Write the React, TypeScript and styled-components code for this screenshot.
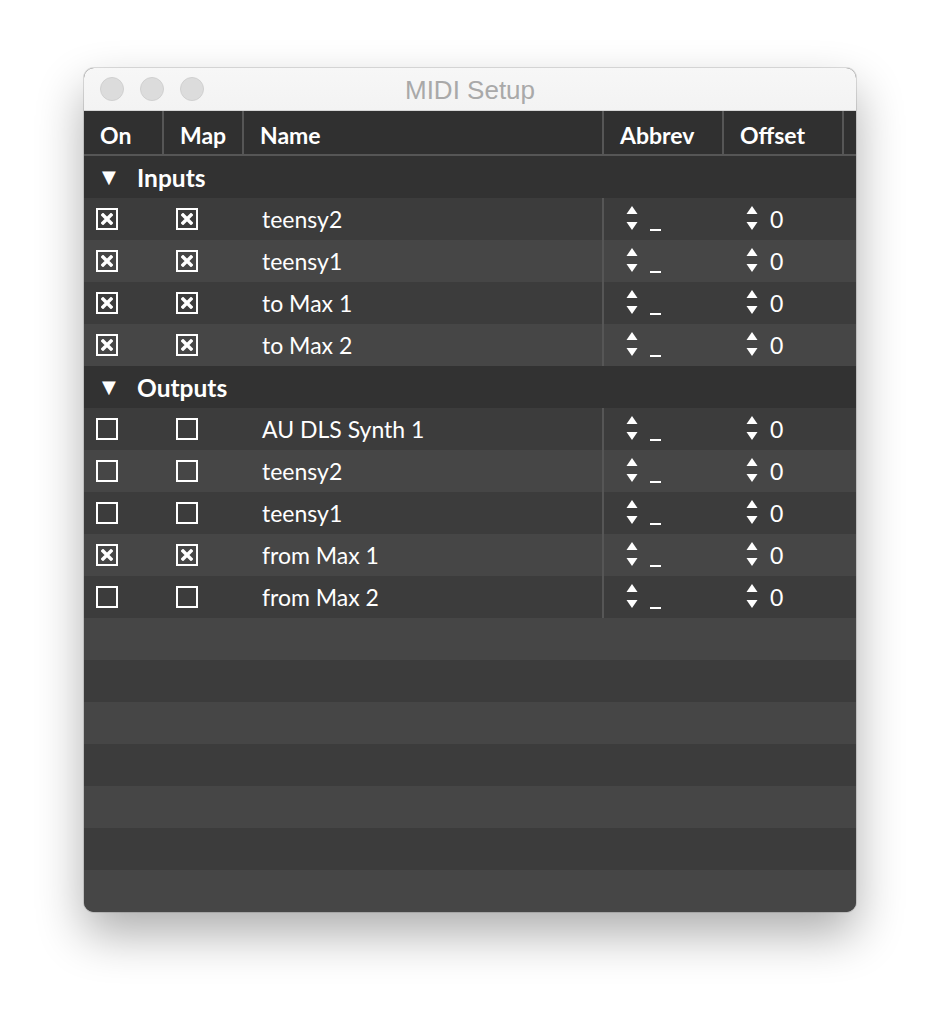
import React from "react";
import styled, { createGlobalStyle } from "styled-components";

const GlobalStyle = createGlobalStyle`
  html, body {
    margin: 0;
    padding: 0;
    background: #ffffff;
  }
  body {
    font-family: Lato, "Open Sans", sans-serif;
  }
`;

type Port = {
  name: string;
  on: boolean;
  map: boolean;
};

const inputs: Port[] = [
  { name: "teensy2", on: true, map: true },
  { name: "teensy1", on: true, map: true },
  { name: "to Max 1", on: true, map: true },
  { name: "to Max 2", on: true, map: true },
];

const outputs: Port[] = [
  { name: "AU DLS Synth 1", on: false, map: false },
  { name: "teensy2", on: false, map: false },
  { name: "teensy1", on: false, map: false },
  { name: "from Max 1", on: true, map: true },
  { name: "from Max 2", on: false, map: false },
];

const COLUMNS = "80px 80px 360px 120px 120px 1fr";
const DARK_ROW = "#3c3c3c";
const LIGHT_ROW = "#464646";
const LINE = "#565656";

function Stepper() {
  return (
    <svg width="12" height="26" viewBox="0 0 12 26">
      <polygon points="6,0 11.5,8 0.5,8" fill="#ffffff" />
      <polygon points="0.5,16 11.5,16 6,24" fill="#ffffff" />
    </svg>
  );
}

function CheckBox({ checked }: { checked: boolean }) {
  return (
    <Box>
      {checked && (
        <svg width="12" height="12" viewBox="0 0 12 12">
          <path
            d="M2 2 L10 10 M10 2 L2 10"
            stroke="#ffffff"
            strokeWidth="3.4"
            strokeLinecap="square"
          />
        </svg>
      )}
    </Box>
  );
}

function PortRow({ port, striped }: { port: Port; striped: boolean }) {
  return (
    <Row $bg={striped ? LIGHT_ROW : DARK_ROW}>
      <CheckCell>
        <CheckBox checked={port.on} />
      </CheckCell>
      <CheckCell>
        <CheckBox checked={port.map} />
      </CheckCell>
      <NameCell>{port.name}</NameCell>
      <StepCell>
        <Stepper />
        <Underscore />
      </StepCell>
      <StepCell>
        <Stepper />
        <Value>0</Value>
      </StepCell>
      <span />
    </Row>
  );
}

function Group({ title, ports }: { title: string; ports: Port[] }) {
  return (
    <>
      <GroupRow>
        <Arrow>▼</Arrow>
        <GroupTitle>{title}</GroupTitle>
      </GroupRow>
      {ports.map((p, i) => (
        <PortRow key={title + p.name} port={p} striped={i % 2 === 1} />
      ))}
    </>
  );
}

export default function App() {
  const empty = [1, 0, 1, 0, 1, 0, 1];
  return (
    <Page>
      <GlobalStyle />
      <Window>
        <TitleBar>
          <Lights>
            <Light />
            <Light />
            <Light />
          </Lights>
          <Title>MIDI Setup</Title>
        </TitleBar>
        <Header>
          <HeadCell>On</HeadCell>
          <HeadCell>Map</HeadCell>
          <HeadCell>Name</HeadCell>
          <HeadCell>Abbrev</HeadCell>
          <HeadCell>Offset</HeadCell>
          <HeadCell $last />
        </Header>
        <Group title="Inputs" ports={inputs} />
        <Group title="Outputs" ports={outputs} />
        {empty.map((s, i) => (
          <EmptyRow key={i} $bg={s ? LIGHT_ROW : DARK_ROW} />
        ))}
      </Window>
    </Page>
  );
}

const Page = styled.div`
  padding: 68px 0 0 84px;
  height: 1012px;
  box-sizing: border-box;
`;

const Window = styled.div`
  width: 772px;
  height: 844px;
  border-radius: 10px;
  overflow: hidden;
  background: ${DARK_ROW};
  box-shadow: 0 0 0 1px rgba(0, 0, 0, 0.12), 0 22px 48px rgba(0, 0, 0, 0.32);
  display: flex;
  flex-direction: column;
`;

const TitleBar = styled.div`
  height: 43px;
  flex-shrink: 0;
  background: linear-gradient(#f7f7f7, #f3f3f3);
  border-bottom: 1px solid #d6d6d6;
  box-sizing: border-box;
  display: flex;
  align-items: center;
  position: relative;
`;

const Lights = styled.div`
  display: flex;
  gap: 16px;
  padding-left: 16px;
`;

const Light = styled.span`
  width: 24px;
  height: 24px;
  border-radius: 50%;
  background: #dcdcdc;
  border: 1px solid #d0d0d0;
  box-sizing: border-box;
`;

const Title = styled.div`
  position: absolute;
  left: 0;
  right: 0;
  top: 7px;
  text-align: center;
  font-family: "Liberation Sans", Arial, sans-serif;
  font-size: 26px;
  line-height: 30px;
  color: #a9a9a9;
  pointer-events: none;
`;

const Header = styled.div`
  height: 45px;
  flex-shrink: 0;
  display: grid;
  grid-template-columns: ${COLUMNS};
  background: #303030;
  border-bottom: 2px solid ${LINE};
  box-sizing: border-box;
`;

const HeadCell = styled.div<{ $last?: boolean }>`
  display: flex;
  align-items: center;
  padding: 4px 0 0 16px;
  color: #ffffff;
  font-weight: 700;
  font-size: 23px;
  border-right: ${(p) => (p.$last ? "none" : `2px solid ${LINE}`)};
`;

const GroupRow = styled.div`
  height: 42px;
  flex-shrink: 0;
  display: flex;
  align-items: center;
  background: #323232;
  color: #ffffff;
  font-weight: 700;
  font-size: 24.5px;
`;

const Arrow = styled.span`
  width: 17px;
  margin-left: 18px;
  margin-right: 18px;
  font-size: 18px;
  font-family: "DejaVu Sans", sans-serif;
  line-height: 1;
`;

const GroupTitle = styled.span``;

const Row = styled.div<{ $bg: string }>`
  height: 42px;
  flex-shrink: 0;
  display: grid;
  grid-template-columns: ${COLUMNS};
  background: ${(p) => p.$bg};
  color: #ffffff;
  font-size: 23px;
`;

const EmptyRow = styled.div<{ $bg: string }>`
  height: 42px;
  flex-shrink: 0;
  background: ${(p) => p.$bg};
`;

const CheckCell = styled.div`
  display: flex;
  align-items: center;
  padding-left: 12px;
`;

const Box = styled.span`
  width: 22px;
  height: 22px;
  border: 2px solid #ffffff;
  box-sizing: border-box;
  display: flex;
  align-items: center;
  justify-content: center;
`;

const NameCell = styled.div`
  display: flex;
  align-items: center;
  padding-left: 18px;
  padding-bottom: 1px;
  border-right: 2px solid ${LINE};
`;

const StepCell = styled.div`
  display: flex;
  align-items: center;
  padding-left: 22px;
  gap: 12px;
`;

const Underscore = styled.span`
  width: 11px;
  height: 2px;
  background: #ffffff;
  margin-top: 22px;
`;

const Value = styled.span`
  padding-bottom: 1px;
`;
